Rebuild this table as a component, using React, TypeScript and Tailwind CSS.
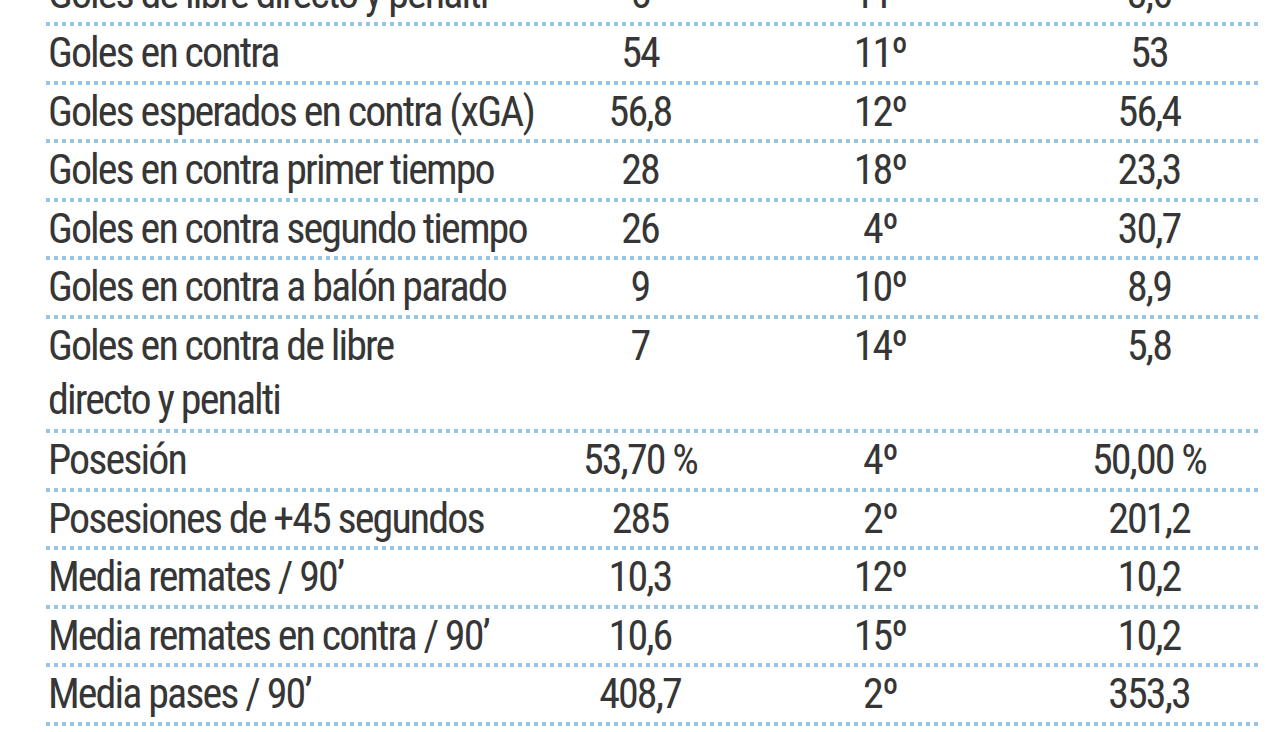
import React from "react";

type Row = {
    label: React.ReactNode;
    value: string;
    rank: string;
    avg: string;
    double?: boolean;
};

const rows: Row[] = [
    { label: "Goles de libre directo y penalti", value: "5", rank: "11º", avg: "3,6" },
    { label: "Goles en contra", value: "54", rank: "11º", avg: "53" },
    { label: "Goles esperados en contra (xGA)", value: "56,8", rank: "12º", avg: "56,4" },
    { label: "Goles en contra primer tiempo", value: "28", rank: "18º", avg: "23,3" },
    { label: "Goles en contra segundo tiempo", value: "26", rank: "4º", avg: "30,7" },
    { label: "Goles en contra a balón parado", value: "9", rank: "10º", avg: "8,9" },
    {
        label: (
            <>
                Goles en contra de libre
                <br />
                directo y penalti
            </>
        ),
        value: "7",
        rank: "14º",
        avg: "5,8",
        double: true,
    },
    { label: "Posesión", value: "53,70 %", rank: "4º", avg: "50,00 %" },
    { label: "Posesiones de +45 segundos", value: "285", rank: "2º", avg: "201,2" },
    { label: "Media remates / 90’", value: "10,3", rank: "12º", avg: "10,2" },
    { label: "Media remates en contra / 90’", value: "10,6", rank: "15º", avg: "10,2" },
    { label: "Media pases / 90’", value: "408,7", rank: "2º", avg: "353,3" },
];

const Dots: React.FC = () => (
    <div className="h-[4px] w-full bg-[repeating-linear-gradient(90deg,#98c6e0_0px,#98c6e0_4px,transparent_4px,transparent_8px)]" />
);

const StatRow: React.FC<{ row: Row }> = ({ row }) => (
    <>
        <div
            className={`grid grid-cols-[514px_160px_320px_218px] leading-[54px] ${
                row.double ? "h-[110px]" : "h-[54.6px]"
            }`}
        >
            <div className="pl-[2px] whitespace-nowrap">{row.label}</div>
            <div className="text-center whitespace-nowrap">{row.value}</div>
            <div className="text-center">{row.rank}</div>
            <div className="text-center whitespace-nowrap">{row.avg}</div>
        </div>
        <Dots />
    </>
);

export default function App() {
    return (
        <div className="w-[1280px] h-[732px] overflow-hidden bg-white">
            <div
                className="-mt-[32.6px] ml-[46px] w-[1212px] text-[42px] tracking-[-1.9px] text-[#363636]"
                style={{ fontFamily: '"Roboto Condensed", "Liberation Sans Narrow", Roboto, sans-serif' }}
            >
                {rows.map((row, i) => (
                    <StatRow key={i} row={row} />
                ))}
            </div>
        </div>
    );
}
